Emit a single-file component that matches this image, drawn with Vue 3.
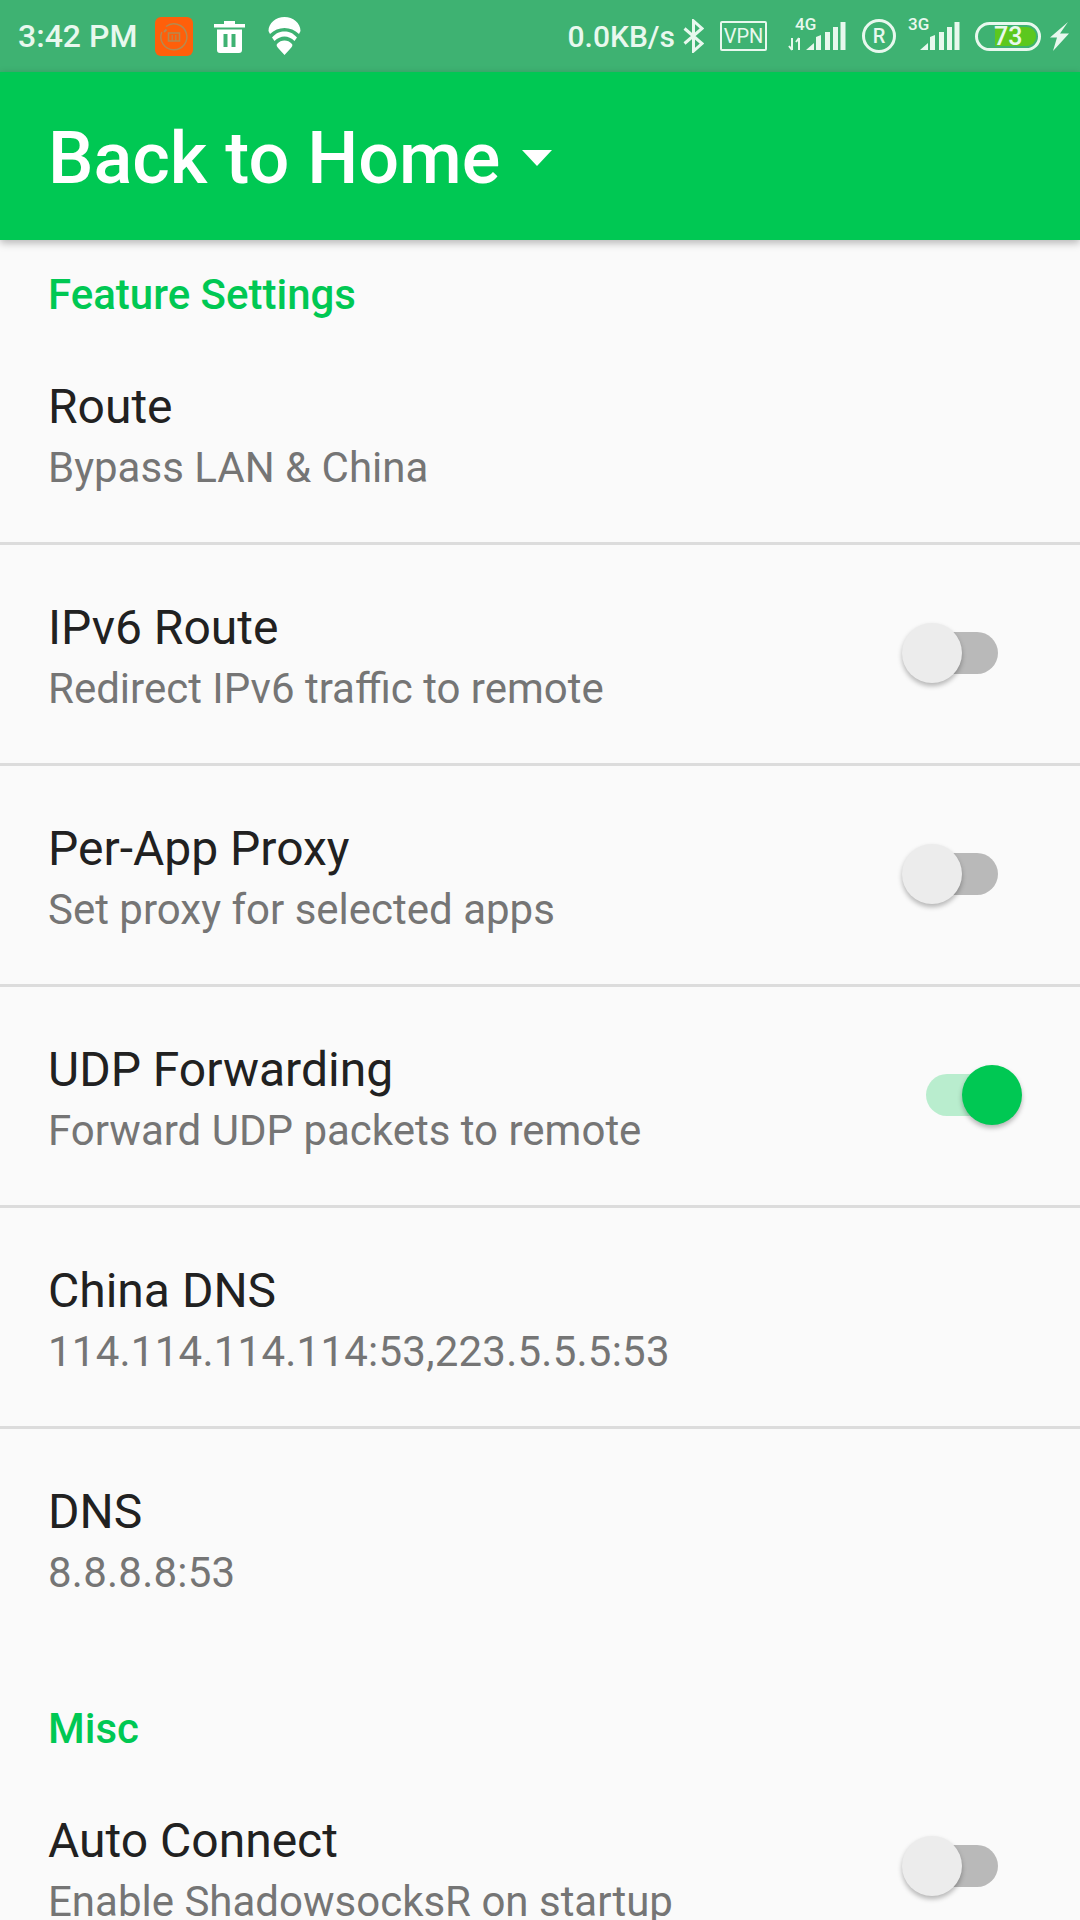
<template>
  <div class="screen">
    <div class="status-bar">
      <span class="clock">3:42 PM</span>
      <svg class="mi-icon" width="38" height="39" viewBox="0 0 38 39">
        <rect width="38" height="39" rx="6" fill="#ff5f0a" />
        <path d="M11 9.500A13 13 0 1 1 6.800 15" fill="none" stroke="#b58a50" stroke-width="1.500" />
        <path d="M9 15l2.500-2.500" fill="none" stroke="#b58a50" stroke-width="2" />
        <rect x="13.500" y="16" width="11" height="8" fill="none" stroke="#b58a50" stroke-width="1.500" />
        <path d="M17.200 18v6M20.800 18v6" fill="none" stroke="#b58a50" stroke-width="1.200" />
      </svg>
      <svg class="trash-icon" width="31" height="33" viewBox="0 0 31 33">
        <path d="M0 4h10V1h11v3h10v3.500H0zM3 9.500h25V30a3 3 0 0 1-3 3H6a3 3 0 0 1-3-3zM9.500 14v13h4V14zM17.500 14v13h4V14z" fill="#fff" fill-rule="evenodd" />
      </svg>
      <svg class="wifi-icon" width="33" height="38" viewBox="0 0 33 38">
        <path d="M.5 14C.5 6 8 0 16.500 0S32.500 6 32.500 14L31 17C27 13 22 11 16.500 11S6 13 2 17z" fill="#fff" />
        <path d="M4 20.500C8 16 12 14.500 16.500 14.500S25 16 29 20.500L26.500 24C23.500 21 20 19.500 16.500 19.500S9.500 21 6.500 24z" fill="#fff" />
        <path d="M9 27C11 24.500 14 23.500 16.500 23.500S22 24.500 24 27C25 28 24 30 22 32L16.500 38 11 32C9 30 8 28 9 27z" fill="#fff" />
      </svg>
      <div class="spacer"></div>
      <span class="speed">0.0KB/s</span>
      <svg class="bt-icon" width="21" height="34" viewBox="0 0 21 34">
        <path d="M1.500 9.500l17.500 15-8.500 7.500V2L19 9.500 1.500 24.500" fill="none" stroke="#e8f8ee" stroke-width="3" />
      </svg>
      <span class="vpn">VPN</span>
      <div class="net net-4g">
        <span class="net-label">4G</span>
        <svg width="58" height="30" viewBox="0 0 58 30">
          <path d="M4 17v12M1 25l3 4M11 29V17M8 21l3-4" fill="none" stroke="#e8f8ee" stroke-width="2" />
          <path d="M18 29l8-7v7zM28 29V16l5-2v15zM37 29V11h5v18zM45 29V6h5v23zM52.500 29V1h5v28z" fill="#e8f8ee" />
        </svg>
      </div>
      <span class="reg">R</span>
      <div class="net net-3g">
        <span class="net-label">3G</span>
        <svg width="40" height="30" viewBox="0 0 40 30">
          <path d="M0 29l8-7v7zM10 29V16l5-2v15zM19 29V11h5v18zM27 29V6h5v23zM34.500 29V1h5v28z" fill="#e8f8ee" />
        </svg>
      </div>
      <div class="battery">
        <div class="battery-fill" :style="{ width: battery + '%' }"></div>
        <span class="battery-num">{{ battery }}</span>
      </div>
      <svg class="bolt" width="19" height="29" viewBox="0 0 19 29">
        <path d="M18 0L10 11.500h9L3 29l4-13.500H0z" fill="#e8f8ee" />
      </svg>
    </div>

    <div class="toolbar">
      <span class="toolbar-title">Back to Home</span>
      <span class="caret"></span>
    </div>

    <div class="content">
      <template v-for="section in sections" :key="section.title">
        <div class="section-title">{{ section.title }}</div>
        <div
          v-for="item in section.items"
          :key="item.title"
          class="row"
          :class="{ divided: item.divider }"
        >
          <div class="row-text">
            <div class="row-title">{{ item.title }}</div>
            <div class="row-sub" :class="{ digits: item.digits }">{{ item.sub }}</div>
          </div>
          <div v-if="item.toggle !== undefined" class="switch" :class="{ on: item.toggle }">
            <div class="track"></div>
            <div class="thumb"></div>
          </div>
        </div>
      </template>
    </div>
  </div>
</template>

<script setup>
const battery = 73;

const sections = [
  {
    title: 'Feature Settings',
    items: [
      { title: 'Route', sub: 'Bypass LAN & China', divider: true },
      { title: 'IPv6 Route', sub: 'Redirect IPv6 traffic to remote', toggle: false, divider: true },
      { title: 'Per-App Proxy', sub: 'Set proxy for selected apps', toggle: false, divider: true },
      { title: 'UDP Forwarding', sub: 'Forward UDP packets to remote', toggle: true, divider: true },
      { title: 'China DNS', sub: '114.114.114.114:53,223.5.5.5:53', digits: true, divider: true },
      { title: 'DNS', sub: '8.8.8.8:53', digits: true }
    ]
  },
  {
    title: 'Misc',
    items: [
      { title: 'Auto Connect', sub: 'Enable ShadowsocksR on startup', toggle: false }
    ]
  }
];
</script>

<style>
html,
body {
  margin: 0;
  background: #fafafa;
}
</style>

<style scoped>
.screen {
  width: 1080px;
  height: 1920px;
  overflow: hidden;
  background: #fafafa;
  font-family: Roboto, "Liberation Sans", sans-serif;
}

.status-bar {
  height: 72px;
  padding: 0 11px 0 18px;
  box-sizing: border-box;
  display: flex;
  align-items: center;
  background: #3eb272;
  color: #e8f8ee;
}

.clock {
  font-size: 32px;
  font-weight: 500;
}

.mi-icon {
  margin-left: 18px;
}

.trash-icon {
  margin-left: 21px;
}

.wifi-icon {
  margin-left: 23px;
}

.spacer {
  flex: 1;
}

.speed {
  font-size: 30px;
  font-weight: 500;
}

.bt-icon {
  margin-left: 8px;
}

.vpn {
  margin-left: 16px;
  width: 47px;
  height: 30px;
  box-sizing: border-box;
  border: 2px solid #e8f8ee;
  border-radius: 2px;
  font-size: 20px;
  line-height: 26px;
  text-align: center;
}

.net {
  position: relative;
  height: 30px;
}

.net svg {
  display: block;
}

.net-4g {
  margin-left: 21px;
}

.net-3g {
  margin-left: 24px;
}

.net-label {
  position: absolute;
  top: -5px;
  font-size: 17px;
  font-weight: 500;
  line-height: 17px;
}

.net-4g .net-label {
  left: 7px;
}

.net-3g .net-label {
  left: -12px;
}

.reg {
  margin-left: 16px;
  width: 34px;
  height: 34px;
  box-sizing: border-box;
  border: 3px solid #e8f8ee;
  border-radius: 50%;
  font-size: 20px;
  font-weight: 500;
  line-height: 28px;
  text-align: center;
}

.battery {
  position: relative;
  margin-left: 15px;
  width: 66px;
  height: 29px;
  padding: 2px;
  box-sizing: border-box;
  display: flex;
  justify-content: flex-end;
  border: 3px solid #e8f8ee;
  border-radius: 15px;
}

.battery-fill {
  height: 100%;
  background: #5cc81e;
  border-radius: 0 9px 9px 0;
}

.battery-num {
  position: absolute;
  top: -6px;
  left: 16px;
  font-size: 25px;
  font-weight: 500;
  line-height: 35px;
}

.bolt {
  margin-left: 9px;
}

.toolbar {
  height: 168px;
  padding: 4px 0 0 48px;
  box-sizing: border-box;
  display: flex;
  align-items: center;
  background: #00c853;
  box-shadow: 0 3px 8px rgba(0, 0, 0, 0.28);
  position: relative;
}

.toolbar-title {
  font-size: 72px;
  font-weight: 500;
  color: #fff;
}

.caret {
  margin-left: 22px;
  width: 0;
  height: 0;
  border-left: 15px solid transparent;
  border-right: 15px solid transparent;
  border-top: 16px solid #fff;
}

.section-title {
  padding: 32px 48px 6px;
  font-size: 42px;
  font-weight: 500;
  line-height: 46px;
  color: #00c853;
}

.section-title:not(:first-child) {
  padding-top: 56px;
}

.row {
  height: 221px;
  padding: 0 58px 0 48px;
  box-sizing: border-box;
  display: flex;
  align-items: center;
  justify-content: space-between;
  border-bottom: 3px solid transparent;
}

.divided {
  border-bottom-color: #dcdcdc;
}

.row-text {
  padding-top: 8px;
}

.row-title {
  font-size: 48px;
  line-height: 61px;
  color: #212121;
}

.row-sub {
  font-size: 42px;
  line-height: 61px;
  color: #757575;
}

.digits {
  letter-spacing: 0.24px;
}

.switch {
  position: relative;
  width: 120px;
  height: 60px;
  margin-top: -2px;
  flex: none;
}

.track {
  position: absolute;
  left: 24px;
  right: 24px;
  top: 9px;
  height: 42px;
  border-radius: 21px;
  background: #b9b9b9;
}

.thumb {
  position: absolute;
  left: 0;
  top: 0;
  width: 60px;
  height: 60px;
  border-radius: 50%;
  background: #ececec;
  box-shadow: 0 3px 5px rgba(0, 0, 0, 0.28);
}

.switch.on .track {
  background: #b9edce;
}

.switch.on .thumb {
  left: auto;
  right: 0;
  background: #00c853;
}
</style>
